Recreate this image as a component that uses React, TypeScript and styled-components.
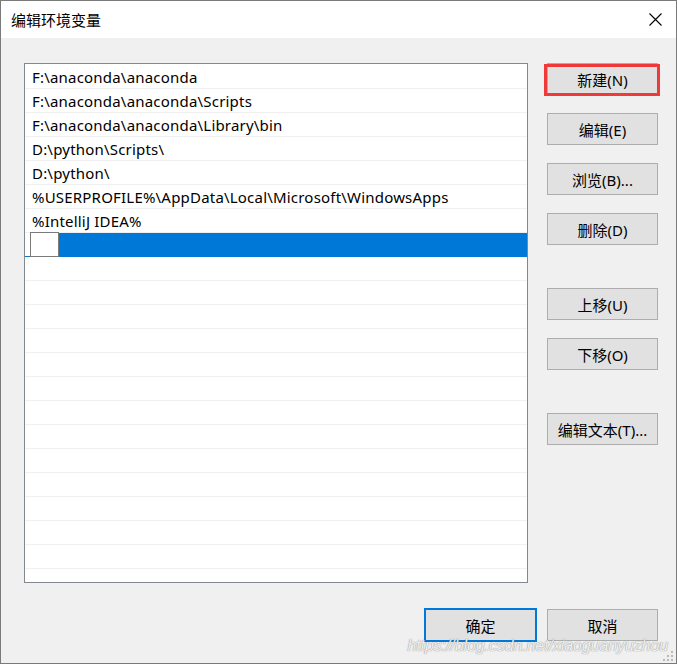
import React from "react";
import styled, { createGlobalStyle, css } from "styled-components";

const GlobalStyle = createGlobalStyle`
  html, body { margin: 0; padding: 0; background: #ffffff; }
  * { box-sizing: border-box; }
`;

const FONT = `"Noto Sans", "Noto Sans CJK SC", sans-serif`;

const Window = styled.div`
  width: 677px;
  height: 664px;
  border: 1px solid #7a7a7a;
  background: #f0f0f0;
  display: flex;
  flex-direction: column;
  position: relative;
  font-family: ${FONT};
  color: #000;
  overflow: hidden;
`;

const TitleBar = styled.div`
  height: 37px;
  background: #ffffff;
  display: flex;
  align-items: center;
  justify-content: space-between;
  padding: 0 14px 0 10px;
  flex-shrink: 0;
`;

const Title = styled.div`
  font-family: "Noto Sans CJK SC", sans-serif;
  font-size: 15px;
  line-height: 1;
`;

const CloseIcon = styled.svg`
  width: 13px;
  height: 13px;
  display: block;
`;

const Body = styled.div`
  flex: 1;
  display: flex;
  flex-direction: column;
  padding: 25px 18px 21px 23px;
`;

const Main = styled.div`
  display: flex;
  gap: 19px;
`;

const ListBox = styled.div`
  width: 504px;
  height: 520px;
  border: 1px solid #828790;
  background: #ffffff;
  padding-top: 1px;
  overflow: hidden;
`;

const Row = styled.div<{ $selected?: boolean }>`
  height: 24px;
  border-bottom: 1px solid ${(p) => (p.$selected ? "#0078d7" : "#f0f0f0")};
  display: flex;
  align-items: center;
  padding-left: 7px;
  font-size: 15px;
  letter-spacing: 0.2px;
  white-space: nowrap;
  ${(p) =>
    p.$selected &&
    css`
      padding-left: 5px;
      align-items: stretch;
    `}
`;

const EditBox = styled.div`
  width: 29px;
  margin-top: -1px;
  margin-bottom: -1px;
  background: #fff;
  border: 1px solid #7a7a7a;
  flex-shrink: 0;
`;

const SelectFill = styled.div`
  flex: 1;
  background: #0078d7;
`;

const ButtonCol = styled.div`
  width: 111px;
  display: flex;
  flex-direction: column;
  position: relative;
`;

const Button = styled.button<{ $gapBefore?: number; $primary?: boolean }>`
  width: 111px;
  height: 32px;
  margin-top: ${(p) => p.$gapBefore ?? 0}px;
  background: #e1e1e1;
  border: 1px solid ${(p) => (p.$primary ? "#0078d7" : "#adadad")};
  ${(p) => p.$primary && css`box-shadow: 0 0 0 1px #0078d7;`}
  font-family: ${FONT};
  font-size: 15px;
  color: #000;
  padding: 0;
  display: flex;
  align-items: center;
  justify-content: center;
  white-space: nowrap;
  position: relative;
`;

const Highlight = styled.div`
  position: absolute;
  left: -3px;
  top: 1px;
  width: 116px;
  height: 32px;
  border: 3px solid #f03a3a;
  pointer-events: none;
`;

const Footer = styled.div`
  display: flex;
  justify-content: flex-end;
  gap: 11px;
  margin-top: 26px;
`;

const Watermark = styled.div`
  position: absolute;
  right: 8px;
  bottom: 8px;
  font-family: "Liberation Sans", Arial, sans-serif;
  font-style: italic;
  font-size: 16px;
  letter-spacing: -0.1px;
  color: rgba(255, 255, 255, 0.9);
  text-shadow: 0 0 1px rgba(110, 110, 110, 0.75), 0 0 1px rgba(110, 110, 110, 0.5);
  pointer-events: none;
`;

const Grip = styled.svg`
  position: absolute;
  right: 2px;
  bottom: 1px;
  width: 11px;
  height: 11px;
`;

const paths = [
  "F:\\anaconda\\anaconda",
  "F:\\anaconda\\anaconda\\Scripts",
  "F:\\anaconda\\anaconda\\Library\\bin",
  "D:\\python\\Scripts\\",
  "D:\\python\\",
  "%USERPROFILE%\\AppData\\Local\\Microsoft\\WindowsApps",
  "%IntelliJ IDEA%",
];

const TOTAL_ROWS = 22;

export default function App() {
  const empties = TOTAL_ROWS - paths.length - 1;
  return (
    <>
      <GlobalStyle />
      <Window>
        <TitleBar>
          <Title>编辑环境变量</Title>
          <CloseIcon viewBox="0 0 13 13">
            <path d="M0.5 0.5 L12.5 12.5 M12.5 0.5 L0.5 12.5" stroke="#000" strokeWidth="1.1" fill="none" />
          </CloseIcon>
        </TitleBar>
        <Body>
          <Main>
            <ListBox>
              {paths.map((p) => (
                <Row key={p}>{p}</Row>
              ))}
              <Row $selected>
                <EditBox />
                <SelectFill />
              </Row>
              {Array.from({ length: empties }).map((_, i) => (
                <Row key={"e" + i} />
              ))}
            </ListBox>
            <ButtonCol>
              <Button>新建(N)</Button>
              <Highlight />
              <Button $gapBefore={18}>编辑(E)</Button>
              <Button $gapBefore={18}>浏览(B)...</Button>
              <Button $gapBefore={18}>删除(D)</Button>
              <Button $gapBefore={43}>上移(U)</Button>
              <Button $gapBefore={18}>下移(O)</Button>
              <Button $gapBefore={43}>编辑文本(T)...</Button>
            </ButtonCol>
          </Main>
          <Footer>
            <Button $primary>确定</Button>
            <Button>取消</Button>
          </Footer>
        </Body>
        <Watermark>https://blog.csdn.net/xiaoguanyuzhou</Watermark>
        <Grip viewBox="0 0 11 11">
          <g fill="#b9b9b9">
            <rect x="8" y="0" width="2" height="2" />
            <rect x="4" y="4" width="2" height="2" />
            <rect x="8" y="4" width="2" height="2" />
            <rect x="0" y="8" width="2" height="2" />
            <rect x="4" y="8" width="2" height="2" />
            <rect x="8" y="8" width="2" height="2" />
          </g>
        </Grip>
      </Window>
    </>
  );
}
